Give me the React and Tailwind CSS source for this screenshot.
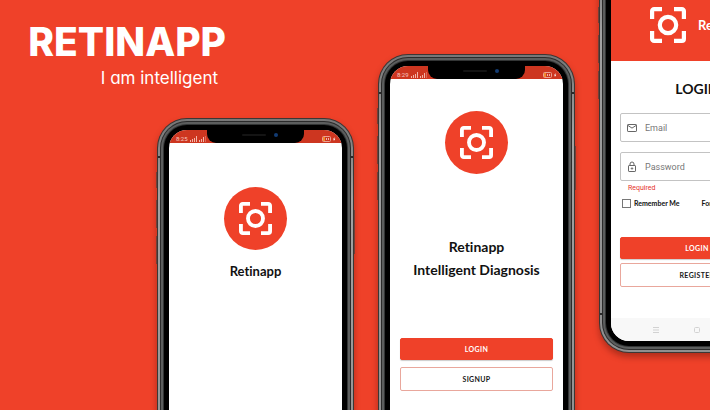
import React from "react";

function ScanIcon({ className }) {
  return (
    <svg viewBox="0 0 36 36" fill="none" stroke="currentColor" strokeWidth="4.200" className={className} aria-hidden="true">
      <path d="M2.100 12V4.100a2 2 0 0 1 2-2H12M24 2.100h7.900a2 2 0 0 1 2 2V12M33.900 24v7.900a2 2 0 0 1-2 2H24M12 33.900H4.100a2 2 0 0 1-2-2V24" />
      <circle cx="18" cy="18" r="8.200" />
    </svg>
  );
}

function Signal() {
  return (
    <svg viewBox="0 0 16 6" className="h-1.5 w-4" fill="#f3b5a9" aria-hidden="true">
      <path d="M0 4h1v2H0zM2 3h1v3H2zM4 2h1v4H4zM6 0h1v6H6zM9 4h1v2H9zM11 3h1v3h-1zM13 1h1v5h-1z" />
      <path d="M15 0h1v6h-1z" opacity=".4" />
    </svg>
  );
}

function Battery() {
  return (
    <svg viewBox="0 0 14 6" className="h-1.5 w-3.5" aria-hidden="true">
      <rect x=".5" y=".5" width="8" height="5" rx="1" fill="none" stroke="#eba193" />
      <path d="M1 1h2v4H1z" fill="#f08a2c" />
      <path d="M4 2h1v2H4zM6 2h1v2H6z" fill="#f3b5a9" />
      <path d="M12.500 1l-1.500 2.500h1l-.3 1.800 1.600-2.600h-1z" fill="#fff" />
    </svg>
  );
}

function Phone({ children, className = "" }) {
  return (
    <div className={`relative h-[400px] w-[197px] shrink-0 ${className}`}>
      <i className="absolute top-[54px] -left-px h-4 w-0.5 bg-[#7d4a40]" />
      <i className="absolute top-[82px] -left-px h-7 w-0.5 bg-[#7d4a40]" />
      <i className="absolute top-[118px] -left-px h-7 w-0.5 bg-[#7d4a40]" />
      <i className="absolute top-[92px] -right-px h-11 w-0.5 bg-[#7d4a40]" />
      <div className="relative h-full rounded-[30px] bg-[#3b3735] p-px shadow-[0_4px_6px_rgba(60,10,0,0.35)]">
        <div className="h-full rounded-[29px] bg-linear-to-b from-[#777777] via-[#a2a2a2] via-20% to-[#8f8f8f] p-0.5">
          <div className="h-full rounded-[27px] bg-[#2b2b2b] p-px">
            <div className="h-full rounded-[26px] bg-[#5c5e5e] p-0.5">
              <div className="h-full rounded-[24px] bg-[#333535] p-px">
                <div className="h-full rounded-[23px] bg-black p-[5px]">
                  <div className="relative flex h-full flex-col overflow-hidden rounded-[18px] bg-white">{children}</div>
                </div>
              </div>
            </div>
          </div>
        </div>
      </div>
      <i className="absolute top-[38px] left-px h-0.5 w-0.5 bg-[#292929]" />
      <i className="absolute top-[38px] right-px h-0.5 w-0.5 bg-[#292929]" />
      <i className="absolute bottom-[38px] left-px h-0.5 w-0.5 bg-[#292929]" />
    </div>
  );
}

function StatusBar({ time }) {
  return (
    <div className="relative flex h-[13px] shrink-0 items-center bg-[#cd3620] pt-1 pr-1.5 pl-[7px]">
      <span className="mr-0.5 font-['Roboto',sans-serif] text-[6px] leading-[6px] text-[#f6c9c0]">{time}</span>
      <Signal />
      <span className="ml-auto"><Battery /></span>
      <div className="absolute inset-x-[38px] -top-1 flex h-[17px] items-center justify-center gap-2 rounded-b-[9px] bg-black pl-2">
        <i className="h-0.5 w-6 rounded-full bg-[#141414]" />
        <i className="size-1 rounded-full bg-[#123b73]" />
      </div>
    </div>
  );
}

function Logo() {
  return (
    <div className="mx-auto flex size-[63px] shrink-0 items-center justify-center rounded-full bg-[#ef4129] text-white">
      <ScanIcon className="size-[33px]" />
    </div>
  );
}

function Button({ primary, children }) {
  return (
    <button
      type="button"
      className={`block w-full rounded-xs border text-[7px] leading-none font-bold tracking-wider ${
        primary ? "h-[22px] border-[#ef4129] bg-[#ef4129] text-white shadow-[0_1px_1px_rgba(0,0,0,0.2)]" : "h-6 border-[#e9a79c] bg-white text-[#191919]"
      }`}
    >
      {children}
    </button>
  );
}

function MailIcon() {
  return (
    <svg viewBox="0 0 10 8" className="h-2 w-2.5 shrink-0" fill="none" stroke="#666" aria-hidden="true">
      <rect x=".5" y=".5" width="9" height="7" rx=".6" />
      <path d="M1 1.500l4 2.600 4-2.600" />
    </svg>
  );
}

function LockIcon() {
  return (
    <svg viewBox="0 0 10 12" className="h-3 w-2.5 shrink-0" fill="none" stroke="#666" aria-hidden="true">
      <rect x="1.500" y="4.500" width="7" height="6" rx=".6" />
      <path d="M3 4.500V3a2 2 0 0 1 4 0v1.500" />
      <path d="M5 6.200v2.600M3.700 7.500h2.600" strokeWidth=".8" />
    </svg>
  );
}

function Field({ label, type, icon }) {
  return (
    <label className="flex h-[29px] items-center gap-2 rounded-xs border border-[#c3c3c3] pl-1.5">
      {icon}
      <input
        type={type}
        aria-label={label}
        placeholder={label}
        className="w-full min-w-0 font-['Roboto',sans-serif] text-[9px] leading-3 outline-none placeholder:text-[#777]"
      />
    </label>
  );
}

export default function App() {
  return (
    <main className="flex h-screen items-start gap-6 overflow-hidden bg-[#ef4129] font-['Lato',sans-serif] text-[#111] [font-variant-ligatures:none]">
      <div className="flex w-[354px] shrink-0 flex-col">
        <header className="flex h-[118px] w-[226px] flex-col items-end pt-5 font-['Inter',sans-serif] text-white">
          <h1 className="text-[39px] leading-11 font-extrabold">RETINAPP</h1>
          <p className="pr-2 text-[17px] leading-7 [font-feature-settings:'cv11']">I am intelligent</p>
        </header>
        <Phone className="self-end">
          <StatusBar time="8:25" />
          <div className="pt-11 text-center">
            <Logo />
            <p className="pt-3 text-[13px] leading-[18px] font-bold">Retinapp</p>
          </div>
        </Phone>
      </div>

      <Phone className="mt-[54px]">
        <StatusBar time="8:29" />
        <div className="px-2.5 pt-8 text-center">
          <Logo />
          <p className="pt-[61px] text-[14px] leading-[23px] font-bold">
            Retinapp
            <br />
            Intelligent Diagnosis
          </p>
          <div className="flex flex-col gap-[7px] pt-[57px]">
            <Button primary>LOGIN</Button>
            <Button>SIGNUP</Button>
          </div>
        </div>
      </Phone>

      <Phone className="-mt-[47px]">
        <StatusBar time="8:29" />
        <div className="flex h-[83px] shrink-0 items-end gap-3 bg-[#ef4129] pb-[18px] pl-[39px] text-white">
          <ScanIcon className="size-9 shrink-0" />
          <p className="text-[13px] leading-9 font-bold">Retinapp</p>
        </div>
        <form className="flex flex-col pt-[18px] pr-2.5 pl-[9px]">
          <h2 className="text-center text-[14px] leading-5 font-bold">LOGIN</h2>
          <div className="flex flex-col gap-2.5 pt-[14px]">
            <Field label="Email" type="email" icon={<MailIcon />} />
            <Field label="Password" type="password" icon={<LockIcon />} />
          </div>
          <p className="pt-0.5 pl-2 font-['Roboto',sans-serif] text-[7px] leading-[10px] text-[#e5322b]">Required</p>
          <div className="flex items-center gap-[22px] pt-[5px] pl-0.5 text-[7px] leading-[10px] font-bold whitespace-nowrap">
            <label className="flex items-center gap-[3px]">
              <input type="checkbox" className="size-[9px] appearance-none border border-[#777] bg-white checked:bg-[#ef4129]" />
              Remember Me
            </label>
            <a href="#forgot">Forgot Password?</a>
          </div>
          <div className="flex flex-col gap-1 pt-[29px]">
            <Button primary>LOGIN</Button>
            <Button>REGISTER</Button>
          </div>
        </form>
        <div className="mt-auto flex h-[23px] items-center justify-around bg-[#f8f8f8] px-6">
          <svg viewBox="0 0 6 6" className="size-1.5" stroke="#d2d2d2" aria-hidden="true"><path d="M0 .5h6M0 3h6M0 5.500h6" /></svg>
          <svg viewBox="0 0 6 6" className="size-1.5" fill="none" stroke="#d2d2d2" aria-hidden="true"><rect x=".5" y=".5" width="5" height="5" rx="1" /></svg>
          <svg viewBox="0 0 6 6" className="size-1.5" fill="none" stroke="#d2d2d2" aria-hidden="true"><path d="M5 .5L1 3l4 2.500z" /></svg>
        </div>
      </Phone>
    </main>
  );
}
